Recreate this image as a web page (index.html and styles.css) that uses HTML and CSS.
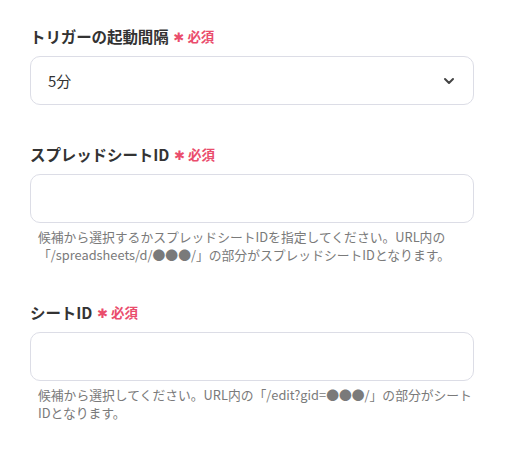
FILE: index.html
```html
<!DOCTYPE html>
<html lang="ja">
<head>
  <meta charset="UTF-8">
  <meta name="viewport" content="width=device-width, initial-scale=1.0">
  <title>トリガー設定</title>
  <link rel="stylesheet" href="styles.css">
</head>
<body>
  <div class="container">
    <div class="form-group">
      <label class="label">トリガーの起動間隔<span class="required"><span class="mark">✱</span>必須</span></label>
      <div class="select">
        <span>5分</span>
        <svg class="chevron" width="12" height="8" viewBox="0 0 12 8"><path d="M2 2 L6 6 L10 2" fill="none" stroke="#444" stroke-width="2" stroke-linecap="round" stroke-linejoin="round"/></svg>
      </div>
    </div>

    <div class="form-group">
      <label class="label" for="sheet">スプレッドシートID<span class="required"><span class="mark">✱</span>必須</span></label>
      <input type="text" id="sheet" class="input">
      <p class="help">候補から選択するかスプレッドシートIDを指定してください。URL内の「/spreadsheets/d/●●●/」の部分がスプレッドシートIDとなります。</p>
    </div>

    <div class="form-group">
      <label class="label" for="tab">シートID<span class="required"><span class="mark">✱</span>必須</span></label>
      <input type="text" id="tab" class="input">
      <p class="help">候補から選択してください。URL内の「/edit?gid=●●●/」の部分がシートIDとなります。</p>
    </div>
  </div>
</body>
</html>
```

FILE: styles.css
```css
* {
  box-sizing: border-box;
}

body {
  margin: 0;
  padding: 0;
  background-color: #fff;
  font-family: "Noto Sans CJK JP", "Noto Sans", sans-serif;
  color: #333;
}

.container {
  padding: 25px 38px 0 30px;
}

.form-group {
  margin-bottom: 38px;
}

.label {
  display: flex;
  align-items: center;
  height: 22px;
  margin-bottom: 9px;
  font-size: 15.5px;
  font-weight: bold;
  color: #333;
  letter-spacing: -0.1px;
}

.required {
  display: flex;
  align-items: center;
  margin-left: 5px;
  font-size: 13.5px;
  font-weight: bold;
  color: #ea4d6c;
}

.required .mark {
  font-family: "DejaVu Sans", sans-serif;
  font-size: 13px;
  font-weight: normal;
  margin-right: 3px;
  margin-top: 2px;
}

.select,
.input {
  display: flex;
  align-items: center;
  width: 100%;
  height: 49px;
  padding: 0 18px 0 17px;
  border: 1px solid #dcdde6;
  border-radius: 10px;
  background-color: #fff;
  font-family: inherit;
  font-size: 15px;
  color: #333;
}

.select {
  justify-content: space-between;
}

.help {
  margin: 5px 0 0;
  padding-left: 8px;
  font-size: 12.8px;
  line-height: 17.5px;
  color: #7a7a7a;
}
```
